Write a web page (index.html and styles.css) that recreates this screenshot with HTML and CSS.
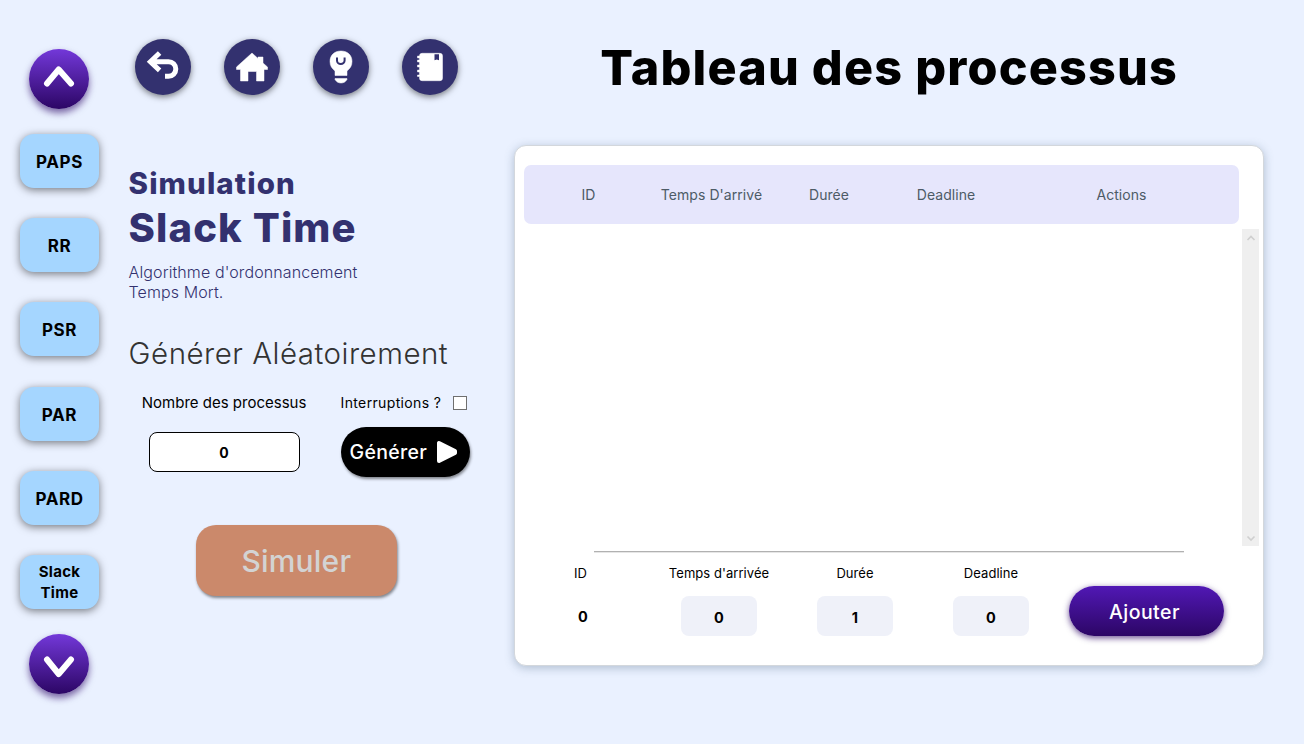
FILE: index.html
```html
<!DOCTYPE html>
<html lang="fr">
<head>
<meta charset="utf-8">
<title>Simulation Slack Time</title>
<link rel="stylesheet" href="styles.css">
</head>
<body>
<div class="app">
  <nav class="sidebar">
    <button class="scroll-btn" aria-label="Haut"><svg width="60" height="60" viewBox="0 0 60 60"><path d="M18 34.500L29.700 20.500L42 34.500"/></svg></button>
    <div class="algos">
      <button class="algo">PAPS</button>
      <button class="algo">RR</button>
      <button class="algo">PSR</button>
      <button class="algo">PAR</button>
      <button class="algo">PARD</button>
      <button class="algo two-lines">Slack<br>Time</button>
    </div>
    <button class="scroll-btn" aria-label="Bas"><svg width="60" height="60" viewBox="0 0 60 60"><path d="M18 25.500L29.700 40L42 25.500"/></svg></button>
  </nav>

  <section class="controls">
    <div class="tools">
      <button class="tool" aria-label="Retour"><svg width="56" height="56" viewBox="0 0 56 56"><path class="line" d="M24.600 14L15.400 22.700L24.600 31.400M16.500 22.700H33.500A7.300 7.300 0 0 1 33.500 37.300H30"/></svg></button>
      <button class="tool" aria-label="Accueil"><svg width="56" height="56" viewBox="0 0 56 56"><path class="fill" d="M28 14L34 19.500V18H39V24L43.500 28V30.500H40V42H32.500V32.500H24V42H16.500V30.500H12.500V28Z"/></svg></button>
      <button class="tool" aria-label="Astuce"><svg width="56" height="56" viewBox="0 0 56 56"><path class="fill" d="M28 12C21 12 17 16.500 17 22.500C17 27 19 29.500 22 32V36.500H34V32C37 29.500 39 27 39 22.500C39 16.500 35 12 28 12ZM22 39.500H34V40.500C32.500 43 30.500 44 28 44S23.500 43 22 40.500Z"/><path class="smile" d="M24 18.500V21.500A3.800 3.500 0 0 0 31.600 21.500V18.500"/></svg></button>
      <button class="tool" aria-label="Cours"><svg width="56" height="56" viewBox="0 0 56 56"><path class="fill" d="M20 14.300H38Q40.500 14.300 40.500 17V39Q40.500 41.700 38 41.700H20Q17.500 41.700 17.500 39V37.500H15.500V36H17.500V33H15.500V31H17.500V28H15.500V26H17.500V23H15.500V21H17.500V19H15.500V17H17.500Q17.500 14.300 20 14.300Z"/><path class="mark" d="M32.500 15.300H37V21.300L34.800 20.500L32.500 21.300Z"/></svg></button>
    </div>
    <header class="intro">
      <h2 class="kicker">Simulation</h2>
      <h1 class="name">Slack Time</h1>
      <p class="desc">Algorithme d'ordonnancement<br>Temps Mort.</p>
    </header>
    <h3 class="random-title">Générer Aléatoirement</h3>
    <div class="random">
      <div class="count">
        <label class="count-label" for="count">Nombre des processus</label>
        <input class="count-input" id="count" value="0">
      </div>
      <div class="generate">
        <label class="interrupts"><span>Interruptions ?</span><i class="check"></i></label>
        <button class="generate-btn"><span>Générer</span><svg width="22" height="24" viewBox="0 0 22 24"><path d="M3 3V21L19 13V11Z"/></svg></button>
      </div>
    </div>
    <button class="simulate">Simuler</button>
  </section>

  <main class="main">
    <h1 class="title">Tableau des processus</h1>
    <div class="panel">
      <div class="table-head">
        <span>ID</span><span>Temps D'arrivé</span><span>Durée</span><span>Deadline</span><span>Actions</span>
      </div>
      <div class="table-body">
        <div class="scrollbar">
          <svg width="17" height="17" viewBox="0 0 17 17"><path d="M5.500 11L9 7.500L12.500 11"/></svg>
          <svg width="17" height="17" viewBox="0 0 17 17"><path d="M5.500 7.500L9 11L12.500 7.500"/></svg>
        </div>
      </div>
      <div class="separator"></div>
      <form class="add">
        <div class="field id-field"><span class="f-label">ID</span><span class="plain">0</span></div>
        <div class="field"><label class="f-label">Temps d'arrivée</label><input value="0"></div>
        <div class="field"><label class="f-label">Durée</label><input value="1"></div>
        <div class="field"><label class="f-label">Deadline</label><input value="0"></div>
        <button type="button" class="add-btn">Ajouter</button>
      </form>
    </div>
  </main>
</div>
</body>
</html>
```
FILE: styles.css
```css
* { box-sizing: border-box; }
body { margin: 0; background: #eaf1ff; font-family: Inter, "Open Sans", sans-serif; color: #000; overflow: hidden; }
h1, h2, h3, p { margin: 0; }
button, input { font: inherit; border: 0; padding: 0; margin: 0; color: inherit; }
svg { display: block; }
.app { display: grid; grid-template-columns: 118px 396.400px 749.600px; height: 744px; }

.sidebar { display: flex; flex-direction: column; align-items: center; gap: 25px; padding-top: 49px; }
.scroll-btn { width: 60px; height: 60px; flex: none; border-radius: 50%; background: linear-gradient(#7338d9, #2c0665); box-shadow: 0 4px 7px rgba(44, 6, 101, .6); }
.scroll-btn path { fill: none; stroke: #fff; stroke-width: 6; stroke-linecap: round; stroke-linejoin: round; }
.algos { display: flex; flex-direction: column; gap: 30.2px; height: 475px; padding-left: 1px; }
.algo { width: 79px; height: 54px; flex: none; padding-top: 2px; border-radius: 14px; background: #a5d6ff; font-size: 17px; font-weight: 700; letter-spacing: .6px; box-shadow: 0 2px 8px rgba(0, 0, 0, .5); }
.algo.two-lines { padding-top: 0; font-size: 15px; line-height: 21px; letter-spacing: .3px; }

.controls { padding: 39px 0 0 10.600px; }
.tools { display: flex; gap: 33px; padding-left: 6px; }
.tool { width: 56px; height: 56px; border-radius: 50%; background: #33316f; box-shadow: 0 2px 6px rgba(0, 0, 0, .5); }
.tool .line { fill: none; stroke: #fff; stroke-width: 5; }
.tool .fill { fill: #fff; stroke: #fff; stroke-width: .5; stroke-linejoin: round; }
.tool .smile { fill: none; stroke: #33316f; stroke-width: 2; }
.tool .mark { fill: #33316f; }
.intro { padding-top: 69px; color: #33316f; white-space: nowrap; }
.kicker { font-size: 29.500px; line-height: 39px; height: 40px; font-weight: 800; letter-spacing: 1.1px; }
.name { font-size: 40px; line-height: 48px; height: 48px; font-weight: 800; letter-spacing: 1.1px; }
.desc { padding-top: 10px; font-size: 16px; line-height: 20px; font-weight: 300; letter-spacing: .1px; }
.random-title { margin-top: 29px; font-size: 29.500px; line-height: 44px; font-weight: 300; letter-spacing: .5px; color: #333; white-space: nowrap; }
.random { display: flex; padding-top: 18px; }
.count { width: 191px; display: flex; flex-direction: column; align-items: center; }
.count-label { line-height: 20px; font-size: 15px; white-space: nowrap; }
.count-input { width: 151px; height: 40px; margin-top: 19px; border: 1px solid #000; border-radius: 8px; background: #fff; text-align: center; font-size: 14px; font-weight: 700; }
.generate { padding-left: 21px; }
.interrupts { display: flex; align-items: center; justify-content: space-between; width: 126px; height: 20px; font-size: 14px; line-height: 18px; letter-spacing: .35px; white-space: nowrap; }
.check { width: 14px; height: 14px; border: 1px solid #6f6f6f; background: #fff; }
.generate-btn { display: flex; align-items: center; justify-content: space-between; width: 129px; height: 50px; margin-top: 14px; padding: 0 11.500px 0 9px; border-radius: 25px; background: #000; color: #fff; font-size: 19.500px; font-weight: 500; letter-spacing: .3px; box-shadow: 1px 2px 3px rgba(0, 0, 0, .45); }
.generate-btn path { fill: #fff; stroke: #fff; stroke-width: 4; stroke-linejoin: round; }
.simulate { width: 201.500px; height: 71px; margin: 48px 0 0 67px; border-radius: 20px; background: #cb896b; color: #d3d3d3; font-size: 30px; font-weight: 500; letter-spacing: .2px; box-shadow: 1px 2px 3px rgba(0, 0, 0, .45); }

.title { height: 144.600px; padding-top: 38px; text-align: center; font-size: 48.500px; line-height: 60px; font-weight: 800; letter-spacing: 1.2px; white-space: nowrap; }
.panel { height: 521px; padding: 19px 0 0; border: 1px solid #d3d7dc; border-radius: 12px; background: #fff; box-shadow: 0 2px 10px rgba(65, 95, 120, .35); }
.table-head { display: grid; grid-template-columns: 129px 117px 118px 116px 235px; width: 715px; height: 59px; margin-left: 8.600px; border-radius: 7px; background: #e6e6fc; color: #4d5b66; text-align: center; line-height: 60px; font-size: 14px; letter-spacing: .05px; white-space: nowrap; }
.table-body { display: flex; justify-content: flex-end; height: 317px; margin: 5.400px 4px 0 8px; }
.scrollbar { display: flex; flex-direction: column; justify-content: space-between; width: 17px; background: #efefef; }
.scrollbar path { fill: none; stroke: #cfcfcf; stroke-width: 1.600; }
.separator { width: 590px; height: 2px; margin: 5px 0 0 78.600px; border-top: 1px solid #b1b1b1; border-bottom: 1px solid #e6e6e6; }
.add { display: flex; padding-top: 10.400px; }
.field { width: 136px; display: flex; flex-direction: column; align-items: center; gap: 13px; white-space: nowrap; }
.field:first-child { margin-left: -.4px; }
.f-label { font-size: 13px; line-height: 20px; letter-spacing: .05px; }
.id-field .f-label { margin-right: 5px; }
.field input, .plain { width: 76px; height: 40px; padding-top: 2px; border-radius: 8px; background: #eff1f9; text-align: center; font-size: 14.500px; line-height: 38px; font-weight: 700; }
.plain { background: none; line-height: 40px; padding-top: 1px; }
.add-btn { width: 155px; height: 50px; margin: 23px 0 0 10px; padding: 2px 4px 0 0; border-radius: 25px; background: linear-gradient(#5118b5, #2c0665); color: #fff; font-size: 19.500px; font-weight: 500; letter-spacing: .45px; box-shadow: 0 2px 6px rgba(44, 6, 101, .7); }
```
